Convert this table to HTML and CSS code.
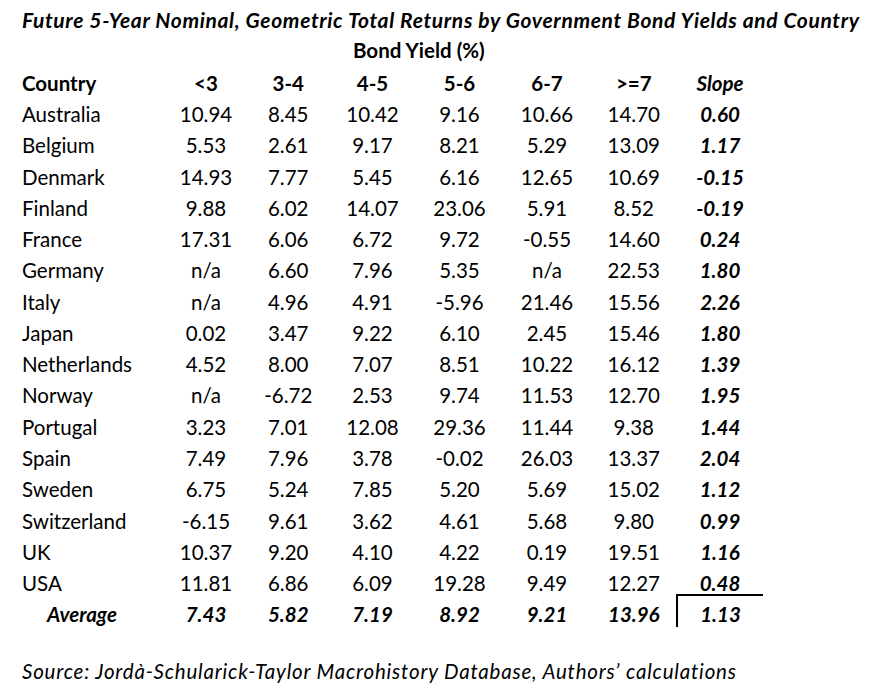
FILE: index.html
```html
<!DOCTYPE html>
<html lang="en">
<head>
<meta charset="utf-8">
<title>Future 5-Year Nominal, Geometric Total Returns</title>
<link rel="stylesheet" href="styles.css">
</head>
<body>
<div class="sheet">
  <div class="title">Future 5-Year Nominal, Geometric Total Returns by Government Bond Yields and Country</div>
  <div class="group">Bond Yield (%)</div>
  <div class="row head">
    <div class="name">Country</div><div>&lt;3</div><div>3-4</div><div>4-5</div><div>5-6</div><div>6-7</div><div>&gt;=7</div><div class="slope-h">Slope</div>
  </div>
  <div class="row"><div class="name">Australia</div><div>10.94</div><div>8.45</div><div>10.42</div><div>9.16</div><div>10.66</div><div>14.70</div><div class="slope">0.60</div></div>
  <div class="row"><div class="name">Belgium</div><div>5.53</div><div>2.61</div><div>9.17</div><div>8.21</div><div>5.29</div><div>13.09</div><div class="slope">1.17</div></div>
  <div class="row"><div class="name">Denmark</div><div>14.93</div><div>7.77</div><div>5.45</div><div>6.16</div><div>12.65</div><div>10.69</div><div class="slope">-0.15</div></div>
  <div class="row"><div class="name">Finland</div><div>9.88</div><div>6.02</div><div>14.07</div><div>23.06</div><div>5.91</div><div>8.52</div><div class="slope">-0.19</div></div>
  <div class="row"><div class="name">France</div><div>17.31</div><div>6.06</div><div>6.72</div><div>9.72</div><div>-0.55</div><div>14.60</div><div class="slope">0.24</div></div>
  <div class="row"><div class="name">Germany</div><div>n/a</div><div>6.60</div><div>7.96</div><div>5.35</div><div>n/a</div><div>22.53</div><div class="slope">1.80</div></div>
  <div class="row"><div class="name">Italy</div><div>n/a</div><div>4.96</div><div>4.91</div><div>-5.96</div><div>21.46</div><div>15.56</div><div class="slope">2.26</div></div>
  <div class="row"><div class="name">Japan</div><div>0.02</div><div>3.47</div><div>9.22</div><div>6.10</div><div>2.45</div><div>15.46</div><div class="slope">1.80</div></div>
  <div class="row"><div class="name">Netherlands</div><div>4.52</div><div>8.00</div><div>7.07</div><div>8.51</div><div>10.22</div><div>16.12</div><div class="slope">1.39</div></div>
  <div class="row"><div class="name">Norway</div><div>n/a</div><div>-6.72</div><div>2.53</div><div>9.74</div><div>11.53</div><div>12.70</div><div class="slope">1.95</div></div>
  <div class="row"><div class="name">Portugal</div><div>3.23</div><div>7.01</div><div>12.08</div><div>29.36</div><div>11.44</div><div>9.38</div><div class="slope">1.44</div></div>
  <div class="row"><div class="name">Spain</div><div>7.49</div><div>7.96</div><div>3.78</div><div>-0.02</div><div>26.03</div><div>13.37</div><div class="slope">2.04</div></div>
  <div class="row"><div class="name">Sweden</div><div>6.75</div><div>5.24</div><div>7.85</div><div>5.20</div><div>5.69</div><div>15.02</div><div class="slope">1.12</div></div>
  <div class="row"><div class="name">Switzerland</div><div>-6.15</div><div>9.61</div><div>3.62</div><div>4.61</div><div>5.68</div><div>9.80</div><div class="slope">0.99</div></div>
  <div class="row"><div class="name">UK</div><div>10.37</div><div>9.20</div><div>4.10</div><div>4.22</div><div>0.19</div><div>19.51</div><div class="slope">1.16</div></div>
  <div class="row"><div class="name">USA</div><div>11.81</div><div>6.86</div><div>6.09</div><div>19.28</div><div>9.49</div><div>12.27</div><div class="slope">0.48</div></div>
  <div class="row avg">
    <div class="name avg-name">Average</div><div>7.43</div><div>5.82</div><div>7.19</div><div>8.92</div><div>9.21</div><div>13.96</div><div class="avg-slope">1.13</div>
  </div>
  <div class="source">Source: Jordà-Schularick-Taylor Macrohistory Database, Authors’ calculations</div>
</div>
</body>
</html>
```

FILE: styles.css
```css
html, body {
  margin: 0;
  padding: 0;
  background: #ffffff;
}

body {
  font-family: Lato, "Noto Sans", sans-serif;
  font-size: 20.5px;
  color: #000000;
  width: 881px;
  height: 695px;
  overflow: hidden;
}

.sheet {
  display: flex;
  flex-direction: column;
}

.title {
  height: 31.27px;
  box-sizing: border-box;
  padding: 8.5px 0 0 22px;
  line-height: 22px;
  font-size: 21px;
  letter-spacing: 0.65px;
  font-weight: 700;
  font-style: italic;
  white-space: nowrap;
}

.group {
  height: 31.27px;
  box-sizing: border-box;
  padding: 7.5px 0 0 353px;
  line-height: 22px;
  font-weight: 700;
  white-space: nowrap;
}

.row {
  display: grid;
  grid-template-columns: 165px 82px 82.5px 86px 88px 87px 86.5px 86px;
  height: 31.27px;
}

.row > div {
  box-sizing: border-box;
  height: 31.27px;
  padding-top: 9.27px;
  line-height: 22px;
  text-align: center;
  white-space: nowrap;
}

.row > .name {
  text-align: left;
  padding-left: 22px;
}

.head {
  font-weight: 700;
}

.head > .slope-h {
  font-style: italic;
  font-weight: 700;
}

.slope {
  font-weight: 700;
  font-style: italic;
}

.avg {
  font-weight: 700;
  font-style: italic;
}

.row > .avg-name {
  padding-left: 47px;
}

.row > .avg-slope {
  border-top: 2px solid #000000;
  border-left: 2px solid #000000;
  height: 33px;
  padding-top: 7.27px;
  margin-left: -1px;
}

.source {
  padding: 35px 0 0 22px;
  font-style: italic;
  letter-spacing: 0.8px;
  line-height: 22px;
  white-space: nowrap;
}
```
